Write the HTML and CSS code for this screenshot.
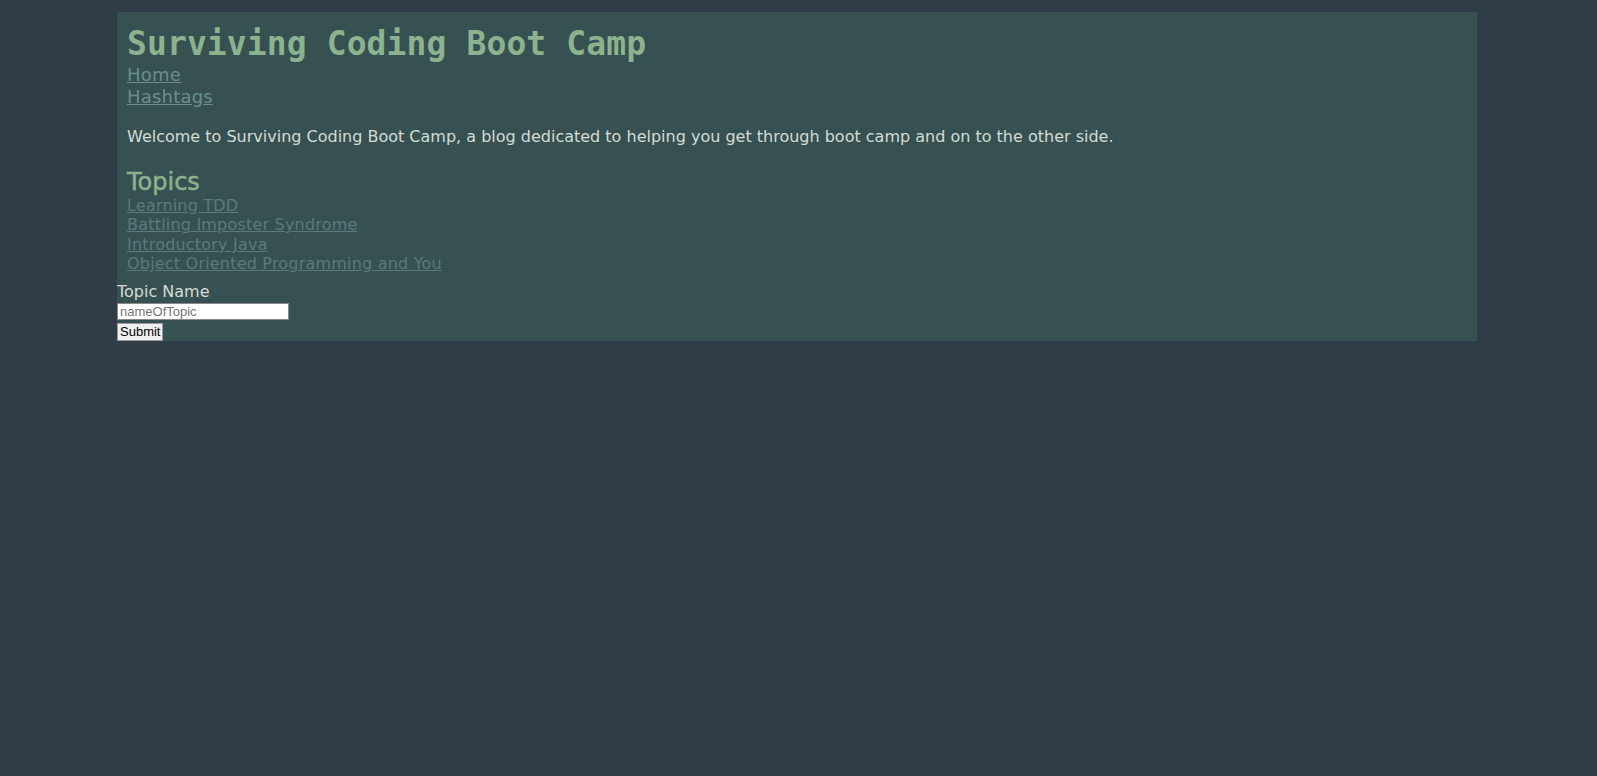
FILE: index.html
```html
<!DOCTYPE html>
<html lang="en">
<head>
<meta charset="utf-8">
<title>Surviving Coding Boot Camp</title>
<link rel="stylesheet" href="styles.css">
</head>
<body>
<div class="page">
  <header class="masthead">
    <h1 class="site-title">Surviving Coding Boot Camp</h1>
    <nav class="main-nav">
      <a class="nav-link" href="#">Home</a>
      <a class="nav-link" href="#">Hashtags</a>
    </nav>
  </header>
  <main class="content">
    <p class="intro">Welcome to Surviving Coding Boot Camp, a blog dedicated to helping you get through boot camp and on to the other side.</p>
    <h2 class="section-title">Topics</h2>
    <ul class="topic-list">
      <li><a class="topic-link" href="#">Learning TDD</a></li>
      <li><a class="topic-link" href="#">Battling Imposter Syndrome</a></li>
      <li><a class="topic-link" href="#">Introductory Java</a></li>
      <li><a class="topic-link" href="#">Object Oriented Programming and You</a></li>
    </ul>
  </main>
  <form class="topic-form">
    <label class="field-label" for="topicName">Topic Name</label>
    <input class="field-input" id="topicName" type="text" placeholder="nameOfTopic">
    <button class="submit-btn" type="submit">Submit</button>
  </form>
</div>
</body>
</html>
```
FILE: styles.css
```css
html, body {
  margin: 0;
  padding: 0;
}

body {
  background: #2e3d47;
  font-family: "DejaVu Sans", "Noto Sans", sans-serif;
  font-size: 16px;
  color: #d3dcd3;
}

.page {
  width: 1360px;
  margin: 12px 0 0 117px;
  background: #375052;
}

.masthead,
.content {
  padding: 0 10px;
}

.site-title {
  margin: 0;
  padding-top: 11px;
  font-family: "DejaVu Sans Mono", "Liberation Mono", monospace;
  font-weight: bold;
  font-size: 33px;
  line-height: 41px;
  letter-spacing: 0.1px;
  color: #8cb28e;
}

.main-nav {
  display: flex;
  flex-direction: column;
  align-items: flex-start;
}

.nav-link {
  font-size: 18px;
  line-height: 22px;
  letter-spacing: 0.2px;
  color: #698f8c;
}

.intro {
  margin: 19px 0 0;
  font-size: 16px;
  line-height: 20px;
  color: #d3dcd3;
}

.section-title {
  margin: 21px 0 0;
  font-size: 24px;
  line-height: 28px;
  font-weight: normal;
  -webkit-text-stroke: 0.5px #8cb28e;
  color: #8cb28e;
}

.topic-list {
  list-style: none;
  margin: 0;
  padding: 0;
}

.topic-list li {
  line-height: 19.4px;
}

.topic-link {
  font-size: 16px;
  letter-spacing: 0.2px;
  color: #587c7b;
}

.topic-form {
  display: flex;
  flex-direction: column;
  align-items: flex-start;
  margin-top: 7px;
}

.field-label {
  font-size: 16px;
  line-height: 21px;
  color: #d3dcd3;
}

.field-input {
  box-sizing: border-box;
  width: 172px;
  height: 17px;
  margin: 1px 0 0;
  padding: 0 2px;
  border: 1px solid #8a8a8a;
  background: #fff;
  font-family: "Liberation Sans", Arial, sans-serif;
  font-size: 13px;
  color: #000;
}

.field-input::placeholder {
  color: #757575;
}

.submit-btn {
  box-sizing: border-box;
  height: 18px;
  margin: 3px 0 0;
  padding: 0 2px;
  border: 1px solid #9a9a9a;
  border-radius: 0;
  background: #f0f0f0;
  font-family: "Liberation Sans", Arial, sans-serif;
  font-size: 13px;
  line-height: 15px;
  color: #000;
}
```
